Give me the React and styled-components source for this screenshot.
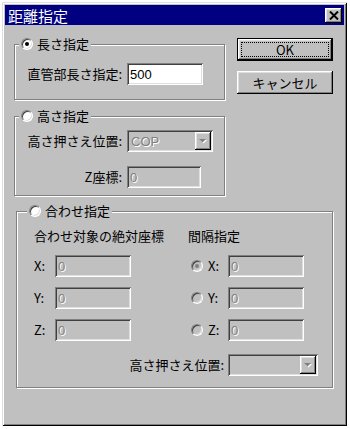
import React from 'react';
import styled, { createGlobalStyle, css } from 'styled-components';

const GlobalStyle = createGlobalStyle`
  html, body {
    margin: 0;
    padding: 0;
    background: #fff;
  }
  body {
    font-family: "Noto Sans CJK JP", "Noto Sans", sans-serif;
    font-size: 13px;
    color: #000;
  }
`;

const raised = css`
  box-shadow: inset -1px -1px #000, inset 1px 1px #fff, inset -2px -2px #808080, inset 2px 2px #dfdfdf;
`;

const sunken = css`
  box-shadow: inset 1px 1px #808080, inset -1px -1px #fff, inset 2px 2px #404040, inset -2px -2px #dfdfdf;
`;

const Window = styled.div`
  box-sizing: border-box;
  margin: 2px 0 0 2px;
  width: 345px;
  height: 424px;
  padding: 3px;
  background: #c0c0c0;
  box-shadow: inset 1px 1px #dfdfdf, inset -1px -1px #000, inset 2px 2px #fff, inset -2px -2px #808080;
`;

const TitleBar = styled.div`
  height: 20px;
  background: #000080;
  color: #fff;
  display: flex;
  align-items: center;
  justify-content: space-between;
  padding: 0 2px 0 3px;
  font-size: 15px;
  line-height: 1;
`;

const CloseButton = styled.div`
  box-sizing: border-box;
  width: 17px;
  height: 15px;
  background: #c0c0c0;
  ${raised};
  display: flex;
  align-items: center;
  justify-content: center;
`;

const Body = styled.div`
  display: grid;
  grid-template-columns: 211px 96px;
  column-gap: 12px;
  row-gap: 15px;
  padding: 13px 0 0 9px;
  align-items: start;
`;

const LeftColumn = styled.div`
  display: flex;
  flex-direction: column;
  gap: 16px;
  padding-top: 6px;
`;

const ButtonColumn = styled.div`
  display: flex;
  flex-direction: column;
  gap: 10px;
`;

const Frame = styled.div`
  position: relative;
  box-sizing: border-box;
  border: 1px solid #808080;
  box-shadow: inset 1px 1px #fff, 1px 1px #fff;
  margin-left: ${p => p.$indent || 0}px;
  padding: ${p => p.$pad};
`;

const WideFrame = styled(Frame)`
  grid-column: 1 / -1;
`;

const Legend = styled.div`
  position: absolute;
  top: -9px;
  left: ${p => p.$left}px;
  height: 16px;
  padding: 0 2px;
  background: #c0c0c0;
  display: flex;
  align-items: center;
  gap: 4px;
  line-height: 16px;
`;

const Radio = styled.span`
  box-sizing: border-box;
  flex: none;
  width: 12px;
  height: 12px;
  border-radius: 50%;
  border: 1px solid;
  border-color: #808080 #fff #fff #808080;
  box-shadow: inset 1px 1px #404040, inset -1px -1px #dfdfdf;
  background: ${p => (p.$disabled ? '#c0c0c0' : '#fff')};
  display: inline-flex;
  align-items: center;
  justify-content: center;
  &::after {
    content: '';
    display: ${p => (p.$checked ? 'block' : 'none')};
    width: 4px;
    height: 4px;
    border-radius: 50%;
    background: ${p => (p.$disabled ? '#808080' : '#000')};
  }
`;

const FormGrid = styled.div`
  display: grid;
  grid-template-columns: 107px auto;
  column-gap: 5px;
  row-gap: ${p => p.$gap || 0}px;
  align-items: center;
  justify-items: start;
`;

const Label = styled.span`
  justify-self: end;
  line-height: 16px;
  white-space: nowrap;
`;

const TextInput = styled.input`
  box-sizing: border-box;
  width: ${p => p.$w}px;
  height: 22px;
  margin: 0;
  border: none;
  outline: none;
  padding: 0 3px;
  ${sunken};
  background: #fff;
  color: #000;
  font-family: "Liberation Sans", "Noto Sans", sans-serif;
  font-size: 13px;
  &:disabled {
    background: #c0c0c0;
    color: #808080;
    text-shadow: 1px 1px #fff;
  }
`;

const Combo = styled.div`
  box-sizing: border-box;
  width: ${p => p.$w}px;
  height: 22px;
  padding: 2px;
  ${sunken};
  display: flex;
  align-items: center;
  color: #808080;
  text-shadow: 1px 1px #fff;
  font-family: "Liberation Sans", "Noto Sans", sans-serif;
  font-size: 13px;
`;

const ComboText = styled.span`
  flex: 1;
  padding-left: 2px;
`;

const DropButton = styled.span`
  box-sizing: border-box;
  width: 16px;
  height: 18px;
  background: #c0c0c0;
  ${raised};
  display: flex;
  align-items: center;
  justify-content: center;
`;

const Heading = styled.div`
  line-height: 16px;
  white-space: nowrap;
  margin-bottom: 1px;
`;

const Columns = styled.div`
  display: grid;
  grid-template-columns: 154px 1fr;
`;

const Column = styled.div`
  display: flex;
  flex-direction: column;
  gap: 10px;
`;

const CoordRow = styled.div`
  display: flex;
  align-items: center;
  padding-left: ${p => p.$indent || 0}px;
`;

const CoordLabel = styled.span`
  display: flex;
  align-items: center;
  gap: 5px;
  width: ${p => p.$w}px;
  flex: none;
  line-height: 16px;
`;

const BottomRow = styled.div`
  display: flex;
  justify-content: flex-end;
  align-items: center;
  gap: 4px;
  margin-top: 13px;
  padding-right: 14px;
`;

const Button = styled.button`
  box-sizing: border-box;
  width: 96px;
  height: 23px;
  margin: 0;
  padding: 3px;
  border: ${p => (p.$default ? '1px solid #000' : 'none')};
  background: #c0c0c0;
  ${raised};
  font-family: "Noto Sans CJK JP", "Noto Sans", sans-serif;
  font-size: 13px;
  color: #000;
  display: flex;
  align-items: stretch;
  justify-content: stretch;
`;

const ButtonFace = styled.span`
  flex: 1;
  display: flex;
  align-items: center;
  justify-content: center;
  border: 1px dotted ${p => (p.$focus ? '#000' : 'transparent')};
  line-height: 1;
`;

const CloseIcon = () => (
  <svg width="10" height="9" viewBox="0 0 10 9">
    <path d="M1 0.5 L9 8.5 M9 0.5 L1 8.5" stroke="#000" strokeWidth="2" />
  </svg>
);

const DropArrow = () => (
  <svg width="8" height="5" viewBox="0 0 8 5">
    <path d="M1 1 H8 L4.5 4.5 Z" fill="#fff" />
    <path d="M0 0 H7 L3.5 3.5 Z" fill="#808080" />
  </svg>
);

const Select = ({ w, value }) => (
  <Combo $w={w}>
    <ComboText>{value}</ComboText>
    <DropButton>
      <DropArrow />
    </DropButton>
  </Combo>
);

const intervals = [
  { axis: 'X', checked: true },
  { axis: 'Y', checked: false },
  { axis: 'Z', checked: false },
];

export default function App() {
  return (
    <>
      <GlobalStyle />
      <Window>
        <TitleBar>
          <span>距離指定</span>
          <CloseButton>
            <CloseIcon />
          </CloseButton>
        </TitleBar>

        <Body>
          <LeftColumn>
            <Frame $pad="18px 0 14px 0">
              <Legend $left={4}>
                <Radio $checked />
                <span>長さ指定</span>
              </Legend>
              <FormGrid>
                <Label>直管部長さ指定:</Label>
                <TextInput $w={76} defaultValue="500" readOnly />
              </FormGrid>
            </Frame>

            <Frame $pad="13px 0 7px 0">
              <Legend $left={4}>
                <Radio />
                <span>高さ指定</span>
              </Legend>
              <FormGrid $gap={14}>
                <Label>高さ押さえ位置:</Label>
                <Select w={86} value="COP" />
                <Label>Z座標:</Label>
                <TextInput $w={74} defaultValue="0" disabled />
              </FormGrid>
            </Frame>
          </LeftColumn>

          <ButtonColumn>
            <Button $default>
              <ButtonFace $focus>OK</ButtonFace>
            </Button>
            <Button>
              <ButtonFace>キャンセル</ButtonFace>
            </Button>
          </ButtonColumn>

          <WideFrame $indent={2} $pad="16px 0 11px 17px">
            <Legend $left={10}>
              <Radio />
              <span>合わせ指定</span>
            </Legend>
            <Columns>
              <Column>
                <Heading>合わせ対象の絶対座標</Heading>
                {['X', 'Y', 'Z'].map(axis => (
                  <CoordRow key={axis}>
                    <CoordLabel $w={21}>{axis}:</CoordLabel>
                    <TextInput $w={76} defaultValue="0" disabled />
                  </CoordRow>
                ))}
              </Column>
              <Column>
                <Heading>間隔指定</Heading>
                {intervals.map(({ axis, checked }) => (
                  <CoordRow key={axis} $indent={3}>
                    <CoordLabel $w={37}>
                      <Radio $disabled $checked={checked} />
                      {axis}:
                    </CoordLabel>
                    <TextInput $w={76} defaultValue="0" disabled />
                  </CoordRow>
                ))}
              </Column>
            </Columns>
            <BottomRow>
              <Label>高さ押さえ位置:</Label>
              <Select w={90} value="" />
            </BottomRow>
          </WideFrame>
        </Body>
      </Window>
    </>
  );
}
